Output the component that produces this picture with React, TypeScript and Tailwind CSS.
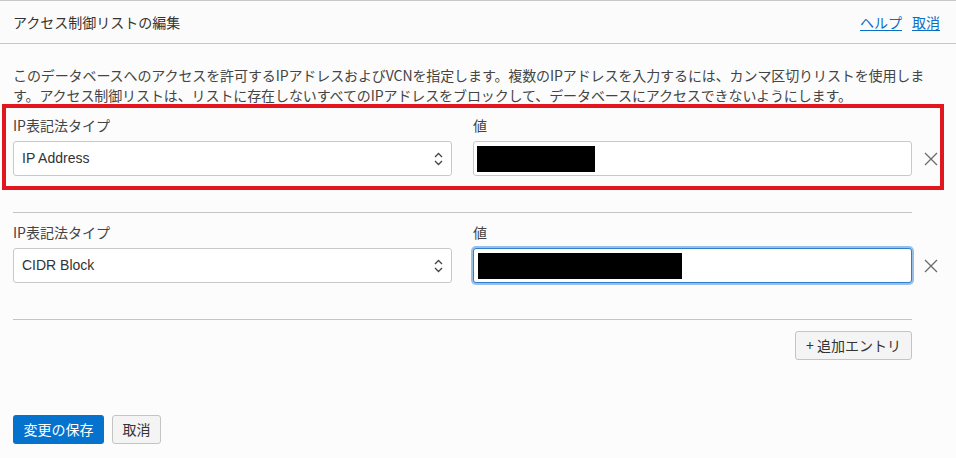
import React from "react";

const jp = { fontFamily: '"Noto Sans CJK JP", "Noto Sans", sans-serif' };

function Chevrons() {
  return (
    <svg width="9" height="14" viewBox="0 0 9 14" fill="none" stroke="#444" strokeWidth="1.3">
      <path d="M1 5 L4.5 1.5 L8 5" />
      <path d="M1 9 L4.5 12.5 L8 9" />
    </svg>
  );
}

function XIcon() {
  return (
    <svg width="14" height="14" viewBox="0 0 14 14" stroke="#6b6b6b" strokeWidth="1.3" fill="none">
      <path d="M1 1 L13 13 M13 1 L1 13" />
    </svg>
  );
}

function Row({ value, redact, focused }: { value: string; redact: number; focused?: boolean }) {
  return (
    <div className="flex items-end">
      <div className="w-[439px] shrink-0">
        <div className="text-[14px] leading-[20px] text-[#444]" style={jp}>IP表記法タイプ</div>
        <div className="mt-[6px] h-[35px] bg-white border border-[#c9c9c9] rounded-[3px] flex items-center justify-between pl-[8px] pr-[8px]">
          <span className="text-[14px] text-[#333]" style={{ fontFamily: '"Liberation Sans", Arial, sans-serif' }}>{value}</span>
          <Chevrons />
        </div>
      </div>
      <div className="w-[439px] shrink-0 ml-[21px]">
        <div className="text-[14px] leading-[20px] text-[#444]" style={jp}>値</div>
        <div
          className={
            focused
              ? "mt-[6px] h-[35px] bg-white border border-[#2f7fd0] rounded-[3px] shadow-[0_0_0_2px_rgba(120,170,225,0.75)] flex items-center pl-[4px]"
              : "mt-[6px] h-[35px] bg-white border border-[#c9c9c9] rounded-[3px] flex items-center pl-[3px]"
          }
        >
          <div className="h-[26px] bg-black" style={{ width: redact }} />
        </div>
      </div>
      <div className="shrink-0 ml-[12px] w-[14px] h-[35px] flex items-center">
        <XIcon />
      </div>
    </div>
  );
}

export default function App() {
  return (
    <div className="w-[956px] h-[458px] bg-[#fcfcfc] overflow-hidden text-[#333]" style={jp}>
      <div className="h-[44px] border-t border-b border-[#c8c8c8] bg-[#fbfbfb] flex items-center justify-between pl-[13px] pr-[16px]">
        <span className="text-[14px] text-[#333]">アクセス制御リストの編集</span>
        <div className="flex gap-[10px] text-[14px] text-[#0b6ec5]">
          <span className="underline underline-offset-2">ヘルプ</span>
          <span className="underline underline-offset-2">取消</span>
        </div>
      </div>
      <div className="px-[13px] pt-[21px]">
        <p className="text-[14px] leading-[20px] text-[#444] w-[935px] tracking-[-0.1px]">
          このデータベースへのアクセスを許可するIPアドレスおよびVCNを指定します。複数のIPアドレスを入力するには、カンマ区切りリストを使用します。アクセス制御リストは、リストに存在しないすべてのIPアドレスをブロックして、データベースにアクセスできないようにします。
        </p>
        <div className="-ml-[11px] -mt-px w-[942px] h-[86px] border-4 border-[#e1161f] pl-[7px] pt-[7px]">
          <Row value="IP Address" redact={118} />
        </div>
        <div className="mt-[22px] w-[899px] border-t border-[#c4c4c4] pt-[9px]">
          <Row value="CIDR Block" redact={204} focused />
        </div>
        <div className="mt-[36px] w-[899px] border-t border-[#c4c4c4] pt-[11px] flex justify-end">
          <button className="h-[29px] w-[117px] bg-[#f4f4f4] border border-[#c4c4c4] rounded-[3px] text-[14px] text-[#333] flex items-center justify-center">
            + 追加エントリ
          </button>
        </div>
        <div className="mt-[55px] flex gap-[8px]">
          <button className="h-[29px] w-[91px] bg-[#0572ce] rounded-[3px] text-[14px] text-white flex items-center justify-center">
            変更の保存
          </button>
          <button className="h-[29px] w-[49px] bg-[#f4f4f4] border border-[#c4c4c4] rounded-[3px] text-[14px] text-[#333] flex items-center justify-center">
            取消
          </button>
        </div>
      </div>
    </div>
  );
}
